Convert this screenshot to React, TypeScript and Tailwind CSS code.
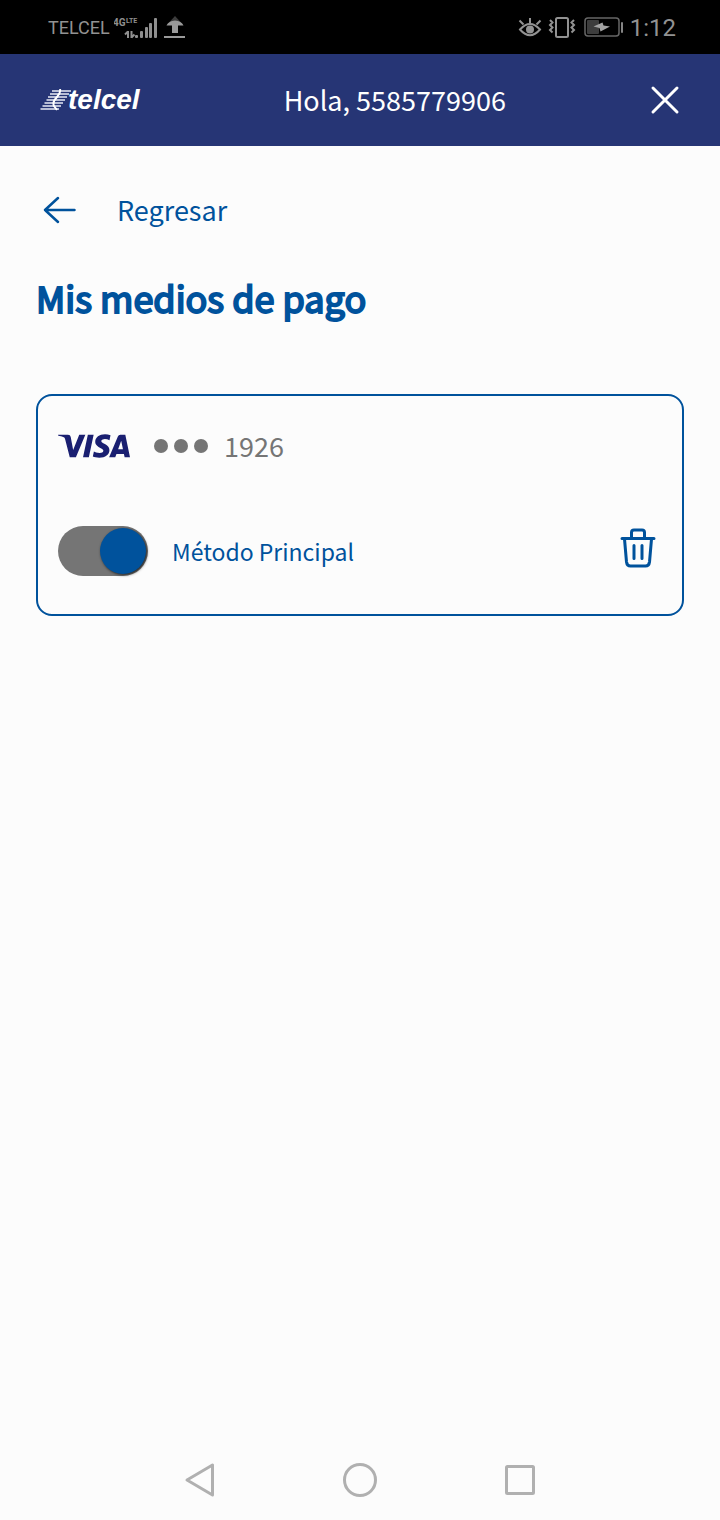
import { useState } from "react";
import { SiVisa } from "react-icons/si";

function SignalIcon() {
  return (
    <svg width="46" height="26" viewBox="0 0 46 26" fill="#8f8f8f" aria-label="4G LTE">
      <text x="-1" y="12" fontFamily="Roboto, sans-serif" fontWeight="700" fontSize="10">4G</text>
      <text x="12" y="9" fontFamily="Roboto, sans-serif" fontWeight="700" fontSize="7">LTE</text>
      <path d="M14 17v7M11 20.500l3-3M17.500 17v7M20.500 20.500L17.500 23.500" stroke="#8f8f8f" strokeWidth="2" fill="none" />
      <rect x="21" y="21" width="3" height="3" rx="1" />
      <rect x="26" y="17" width="3" height="7" rx="1" />
      <rect x="31" y="13" width="3" height="11" rx="1" />
      <rect x="35" y="9" width="3" height="15" rx="1" />
      <rect x="40" y="4" width="3" height="20" rx="1" />
    </svg>
  );
}

function UploadIcon() {
  return (
    <svg width="22" height="24" viewBox="0 0 22 24" fill="#9a9a9a">
      <path d="M5.500 7L11 1L16.500 7Z" fill="#3c3c3c" />
      <path d="M2.500 10.500Q4.500 6 11 5.500Q17.500 6 19.500 10.500H14V18H8V10.500Z" />
      <rect x="0" y="21" width="21" height="2" />
    </svg>
  );
}

function EyeIcon() {
  return (
    <svg width="24" height="24" viewBox="0 0 24 24" fill="none" stroke="#929292" strokeWidth="2">
      <path d="M2 14.500Q12 3.500 22 14.500Q12 26 2 14.500Z" />
      <circle cx="12" cy="14.500" r="4" fill="#929292" stroke="none" />
      <path d="M12 3v5M1.500 5.500l4 4M22.500 5.500l-4 4" />
    </svg>
  );
}

function VibrateIcon() {
  return (
    <svg width="28" height="24" viewBox="0 0 28 24" fill="none" stroke="#929292" strokeWidth="2">
      <rect x="8" y="3" width="12" height="19" rx="1.500" strokeWidth="2" />
      <path d="M2 5l2.500 2.500L2 10l2.500 2.500L2 15l2.500 2.500M26 5l-2.500 2.500L26 10l-2.500 2.500L26 15l-2.500 2.500" />
    </svg>
  );
}

function BatteryIcon() {
  return (
    <svg width="40" height="20" viewBox="0 0 40 20">
      <rect x="1" y="1" width="34" height="18" rx="3" fill="none" stroke="#666" strokeWidth="1.500" />
      <rect x="3" y="3" width="12" height="14" rx="1" fill="#3d3d3d" />
      <path d="M9.500 9.500L18.500 5.500L19.500 8.500L26 9.500L16.500 14.500L15.500 11Z" fill="#a2a2a2" />
      <rect x="37" y="5" width="2" height="11" rx="1" fill="#858585" />
    </svg>
  );
}

function TelcelLogo() {
  return (
    <div className="flex items-center text-white" aria-label="telcel">
      <svg width="32" height="22" viewBox="0 0 32 22" stroke="#e8ebf6" strokeWidth="2" fill="none">
        <path d="M12 2H31M10 5H29M8 8H27M6.500 11H25M4.500 14H23M2.500 17H21M0.500 20H19" opacity="0.750" />
        <path d="M20 0Q21 4 17 8Q12 13 14 17L17 21" stroke="white" strokeWidth="2" />
      </svg>
      <span className="-ml-1 font-['Liberation_Sans',sans-serif] text-[28px] leading-[26px] font-bold italic">telcel</span>
    </div>
  );
}

function TrashIcon() {
  return (
    <svg width="36" height="40" viewBox="0 0 36 40" fill="none" stroke="#00529c" strokeWidth="3" strokeLinecap="round" strokeLinejoin="round">
      <path d="M2 10.500H34M11.500 10V4.500Q11.500 2 14 2H22Q24.500 2 24.500 4.500V10" />
      <path d="M4.500 11L6.500 34Q7 38 10.500 38H25.500Q29 38 29.500 34L31.500 11" />
      <path d="M14 17.500V30.500M22 17.500V30.500" />
    </svg>
  );
}

export default function App() {
  const [primary, setPrimary] = useState(true);

  return (
    <div className="flex min-h-screen flex-col bg-[#fcfcfc] font-['Noto_Sans_CJK_SC',sans-serif] text-[#00529c]">
      <div className="flex h-[54px] items-center justify-between bg-black pr-11 pl-12 font-[Roboto,sans-serif] text-[#929292]">
        <div className="flex items-center">
          <span className="text-[18px]">TELCEL</span>
          <span className="ml-1"><SignalIcon /></span>
          <span className="ml-1"><UploadIcon /></span>
        </div>
        <div className="flex items-center">
          <EyeIcon />
          <span className="ml-[6px]"><VibrateIcon /></span>
          <span className="ml-2"><BatteryIcon /></span>
          <span className="ml-[6px] pt-[2px] text-[24px]">1:12</span>
        </div>
      </div>

      <header className="flex h-[92px] items-center justify-between bg-[#263575] px-10 text-white">
        <TelcelLogo />
        <p className="text-[27px] leading-[40px]">Hola, 5585779906</p>
        <button type="button" aria-label="Cerrar">
          <svg width="30" height="30" viewBox="0 0 30 30" stroke="white" strokeWidth="3" strokeLinecap="round">
            <path d="M3 3L27 27M27 3L3 27" />
          </svg>
        </button>
      </header>

      <main className="flex flex-1 flex-col items-start px-9 pt-11">
        <a href="#" className="flex items-center gap-10 pl-[7px] text-[27px] leading-[40px]">
          <svg width="34" height="28" viewBox="0 0 34 28" fill="none" stroke="#00529c" strokeWidth="2.500" strokeLinecap="round" strokeLinejoin="round">
            <path d="M31.500 14H2M15 2L2 14L15 26" />
          </svg>
          Regresar
        </a>
        <h1 className="mt-10 text-[36px] leading-[54px] font-normal [-webkit-text-stroke:2px_#00529c]">Mis medios de pago</h1>

        <section className="mt-[70px] w-full rounded-[16px] border-2 border-[#00529c] px-5 pt-[30px] pb-[38px]">
          <div className="flex h-10 items-center text-[#757575]">
            <SiVisa className="h-[72px] w-[72px] text-[#1a1f71]" aria-label="VISA" />
            <div className="ml-6 flex gap-[6px]">
              <span className="h-[14px] w-[14px] rounded-full bg-[#757575]" />
              <span className="h-[14px] w-[14px] rounded-full bg-[#757575]" />
              <span className="h-[14px] w-[14px] rounded-full bg-[#757575]" />
            </div>
            <span className="ml-4 text-[27px] leading-[40px]">1926</span>
          </div>
          <div className="mt-[60px] flex items-center justify-between">
            <label className="flex items-center gap-6 text-[23px] leading-[34px]">
              <input
                type="checkbox"
                role="switch"
                checked={primary}
                onChange={(e) => setPrimary(e.target.checked)}
                className="flex h-[50px] w-[90px] appearance-none items-center rounded-full bg-[#757575] px-[2px] before:h-[46px] before:w-[46px] before:rounded-full before:bg-[#00529c] before:shadow-[1px_1px_3px_rgba(0,0,0,0.7)] checked:justify-end"
              />
              Método Principal
            </label>
            <button type="button" aria-label="Eliminar" className="mr-[6px] mb-[6px]">
              <TrashIcon />
            </button>
          </div>
        </section>
      </main>

      <nav className="flex h-20 items-center justify-center gap-[124px]">
        <button type="button" aria-label="Atrás">
          <svg width="36" height="36" viewBox="0 0 36 36" fill="none" stroke="#b0b0b0" strokeWidth="3" strokeLinejoin="round">
            <path d="M30.500 3V33L5 18Z" />
          </svg>
        </button>
        <button type="button" aria-label="Inicio">
          <svg width="36" height="36" viewBox="0 0 36 36" fill="none" stroke="#b0b0b0" strokeWidth="3">
            <circle cx="18" cy="18" r="15.500" />
          </svg>
        </button>
        <button type="button" aria-label="Recientes">
          <svg width="36" height="36" viewBox="0 0 36 36" fill="none" stroke="#b0b0b0" strokeWidth="3">
            <rect x="4.500" y="4.500" width="27" height="27" rx="1" />
          </svg>
        </button>
      </nav>
    </div>
  );
}
